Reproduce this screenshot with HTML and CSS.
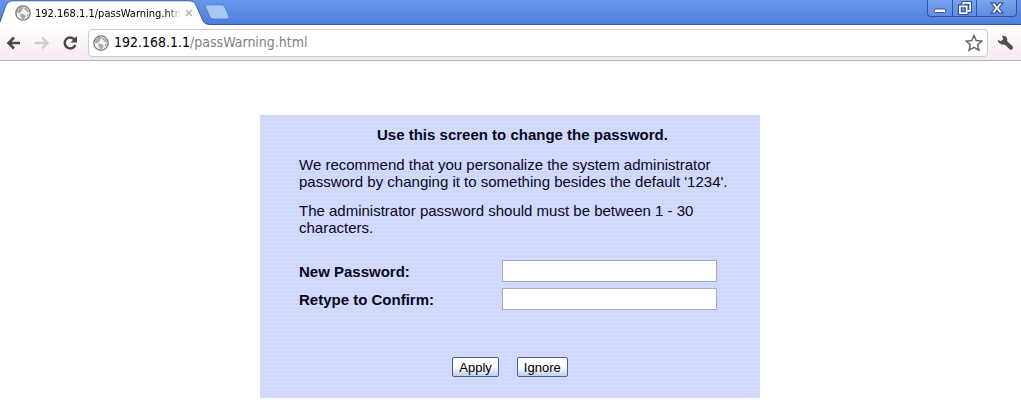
FILE: index.html
```html
<!DOCTYPE html>
<html lang="en">
<head>
<meta charset="utf-8">
<title>192.168.1.1/passWarning.html</title>
<link rel="stylesheet" href="styles.css">
</head>
<body>
<svg class="defs" width="0" height="0" aria-hidden="true">
  <symbol id="globe" viewBox="0 0 16 16">
    <circle cx="8" cy="8" r="7.2" fill="#f4f4f4" stroke="#777" stroke-width="1.3"/>
    <path fill="#aaa" d="M3 4.2 5.6 2l3.2.3-.6 1.6-1.5.9.3 1.3-1.7 1.1-1 1.2-1.7-.6-.9-1.3zM9.3 2.3l3 1.4 1.8 3-.7 1-1.7-1-1.3-1.6-1.4-.9zM5.4 8.4l2.7.6 2.6 1.5-.5 1.8-1.6 2.2-1.5.2-.6-2.2-1.4-1.9zM12 9l2-.2-.9 2.4-1.2.8z"/>
  </symbol>
</svg>
<header class="browser">
  <div class="tabstrip">
    <div class="tab">
      <svg class="tab-shape" width="210" height="25" viewBox="0 0 210 25" aria-hidden="true">
        <path d="M0 25V22L6 5Q8 .8 12 .8H190Q194 .8 196 5L203 21Q204.500 24.500 209 24.500V25z" fill="#fff"/>
        <path d="M0 22 6 5Q8 .8 12 .8H190Q194 .8 196 5L203 21Q204.500 24.500 210 24.500" fill="none" stroke="#3d5f9f"/>
      </svg>
      <svg class="tab-icon" width="16" height="16" aria-hidden="true"><use href="#globe"/></svg>
      <span class="tab-title">192.168.1.1/passWarning.html</span>
      <button class="plain" aria-label="Close tab"><svg width="8" height="8" viewBox="0 0 8 8"><path d="M1 1l6 6M7 1 1 7" stroke="#aaa" stroke-width="1.300"/></svg></button>
    </div>
    <button class="plain new-tab" aria-label="New tab"><svg width="27" height="16" viewBox="0 0 27 16"><path d="M3 .8H18Q20 .8 21 3L25 13Q25.500 15 23 15H9Q7 15 6 13L1.500 3Q1 .8 3 .8z" fill="#a8c8f4" stroke="#5580cc"/></svg></button>
    <div class="window-controls">
      <button class="plain win" aria-label="Minimize"><svg width="16" height="16" viewBox="0 0 16 16"><rect x="2.500" y="9" width="11" height="3.500" rx="1" fill="#fff" stroke="#31528f"/></svg></button>
      <button class="plain win" aria-label="Restore"><svg width="16" height="16" viewBox="0 0 14 14"><path d="M5.500 4V2.500h6v7H9.500M2.500 5.500h6v6h-6z" fill="none" stroke="#31528f" stroke-width="3.400"/><path d="M5.500 4V2.500h6v7H9.500M2.500 5.500h6v6h-6z" fill="none" stroke="#fff" stroke-width="1.500"/></svg></button>
      <button class="plain win win-close" aria-label="Close"><svg width="16" height="16" viewBox="0 0 14 14"><path d="M1.800 2.500h3.400l1.800 2.500 1.800-2.500h3.400L8.900 7l3.300 4.500H8.800L7 9l-1.800 2.500H1.800L5.100 7z" fill="#fff" stroke="#31528f"/></svg></button>
    </div>
  </div>
  <div class="toolbar">
    <button class="plain" aria-label="Back"><svg width="16" height="16" viewBox="0 0 16 16"><path d="M14 8H3M8 2.500 2.500 8 8 13.500" fill="none" stroke="#484448" stroke-width="2.600"/></svg></button>
    <button class="plain" aria-label="Forward"><svg width="16" height="16" viewBox="0 0 16 16"><path d="M1 8h12M8 2.500 13.500 8 8 13.500" fill="none" stroke="#d0cbd0" stroke-width="2.400"/></svg></button>
    <button class="plain" aria-label="Reload"><svg width="16" height="16" viewBox="0 0 16 16"><path d="M12.500 4.500A5.500 5.500 0 1 0 13.300 10" fill="none" stroke="#484448" stroke-width="2.400"/><path d="M15 1v6.500H8.500z" fill="#484448"/></svg></button>
    <div class="omnibox">
      <svg width="16" height="16" aria-hidden="true"><use href="#globe"/></svg>
      <span class="url"><span class="host">192.168.1.1</span>/passWarning.html</span>
      <button class="plain" aria-label="Bookmark this page"><svg width="18" height="18" viewBox="0 0 18 18"><path d="M9 1.500 11.200 6.600 16.800 7.100 12.600 10.800 13.900 16.200 9 13.300 4.100 16.200 5.400 10.800 1.200 7.100 6.800 6.600z" fill="#fff" stroke="#66666c" stroke-width="1.500"/></svg></button>
    </div>
    <button class="plain wrench" aria-label="Customize"><svg width="18" height="18" viewBox="0 0 18 18"><path d="M1.500 5.500 4.500 7.200l2.700-1.700L6.200 1.800Q10.500 1.500 11.200 5L11.200 7.200 16.800 12.600Q17.500 15.800 14.500 16L8.500 10.600Q2.500 11 1.500 5.500z" fill="#504c50"/></svg></button>
  </div>
</header>
<main class="page">
  <form class="panel">
    <h1 class="title">Use this screen to change the password.</h1>
    <p class="text">We recommend that you personalize the system administrator password by changing it to something besides the default '1234'.</p>
    <p class="text">The administrator password should must be between 1 - 30 characters.</p>
    <div class="fields">
      <label for="new-password">New Password:</label>
      <input id="new-password" type="password">
      <label for="confirm">Retype to Confirm:</label>
      <input id="confirm" type="password">
    </div>
    <div class="actions">
      <button class="action" type="button">Apply</button>
      <button class="action" type="button">Ignore</button>
    </div>
  </form>
</main>
</body>
</html>
```
FILE: styles.css
```css
* { box-sizing: border-box; }

body {
  margin: 0;
  background: #fff;
  color: #080820;
  font-family: "Liberation Sans", Arial, sans-serif;
  font-size: 15px;
  line-height: 17px;
}

.defs { position: absolute; }

.plain {
  display: flex;
  align-items: center;
  justify-content: center;
  padding: 0;
  border: 0;
  background: none;
}

.browser { font-family: "DejaVu Sans Condensed", "Open Sans", sans-serif; }

.tabstrip {
  display: flex;
  height: 25px;
  background: linear-gradient(#6797ec, #4f7fdc);
  border-bottom: 1px solid #3a5a96;
}

.tab {
  position: relative;
  display: flex;
  align-items: center;
  gap: 4px;
  width: 204px;
  height: 25px;
  padding: 1px 0 0 15px;
}

.tab > * { position: relative; }
.tab > .tab-shape { position: absolute; left: 0; top: 0; }
.tab-icon { flex: none; }

.tab-title {
  width: 146px;
  overflow: hidden;
  color: #000;
  font-size: 11px;
  white-space: nowrap;
  mask-image: linear-gradient(90deg, #000 90%, transparent);
}

.new-tab { align-self: center; }

.window-controls {
  display: flex;
  height: 17px;
  margin: 0 4px 0 auto;
  border: 1px solid #2f529b;
  border-top: 0;
  border-radius: 0 0 4px 4px;
  background: linear-gradient(#7ba4ee, #5c8be2);
}

.win { width: 24px; }
.win + .win { border-left: 1px solid #2f529b; }
.win-close { width: 40px; }

.toolbar {
  display: flex;
  align-items: center;
  gap: 12px;
  height: 36px;
  padding: 0 7px 0 6px;
  background: linear-gradient(#fff, #f4e9f3);
  border-bottom: 1px solid #b9b3bb;
}

.omnibox {
  display: flex;
  flex: 1;
  align-items: center;
  gap: 5px;
  height: 28px;
  margin-left: -2px;
  padding: 0 4px;
  border: 1px solid #d0c8cf;
  border-radius: 4px;
  background: #fff;
}

.url { flex: 1; color: #808080; font-size: 14px; }
.host { color: #000; }
.wrench { margin-left: -4px; }

.page { padding: 54px 17px 20px 16px; }

.panel {
  max-width: 500px;
  margin: 0 auto;
  padding: 11px 30px 21px 39px;
  background: repeating-linear-gradient(#ced7fc 0 2px, #d3dafc 2px 4px);
}

.title {
  margin: 0 0 13px;
  padding-left: 16px;
  font-size: 15px;
  text-align: center;
}

.text { margin: 0 0 12px; }

.fields {
  display: grid;
  grid-template-columns: 1fr 215px;
  gap: 6px 12px;
  align-items: center;
  padding: 12px 13px 0 0;
  font-weight: bold;
}

.fields input {
  width: 100%;
  height: 22px;
  padding: 2px 4px;
  border: 1px solid #a3a9c9;
  background: #fff;
}

.actions {
  display: flex;
  justify-content: center;
  gap: 18px;
  margin: 47px 9px 0 0;
}

.action {
  height: 20px;
  padding: 0 6px;
  border: 1px solid #48608e;
  border-radius: 2px;
  background: linear-gradient(#fff 45%, #c3cfe8);
  color: #000;
  font-family: inherit;
  font-size: 13px;
}
```
